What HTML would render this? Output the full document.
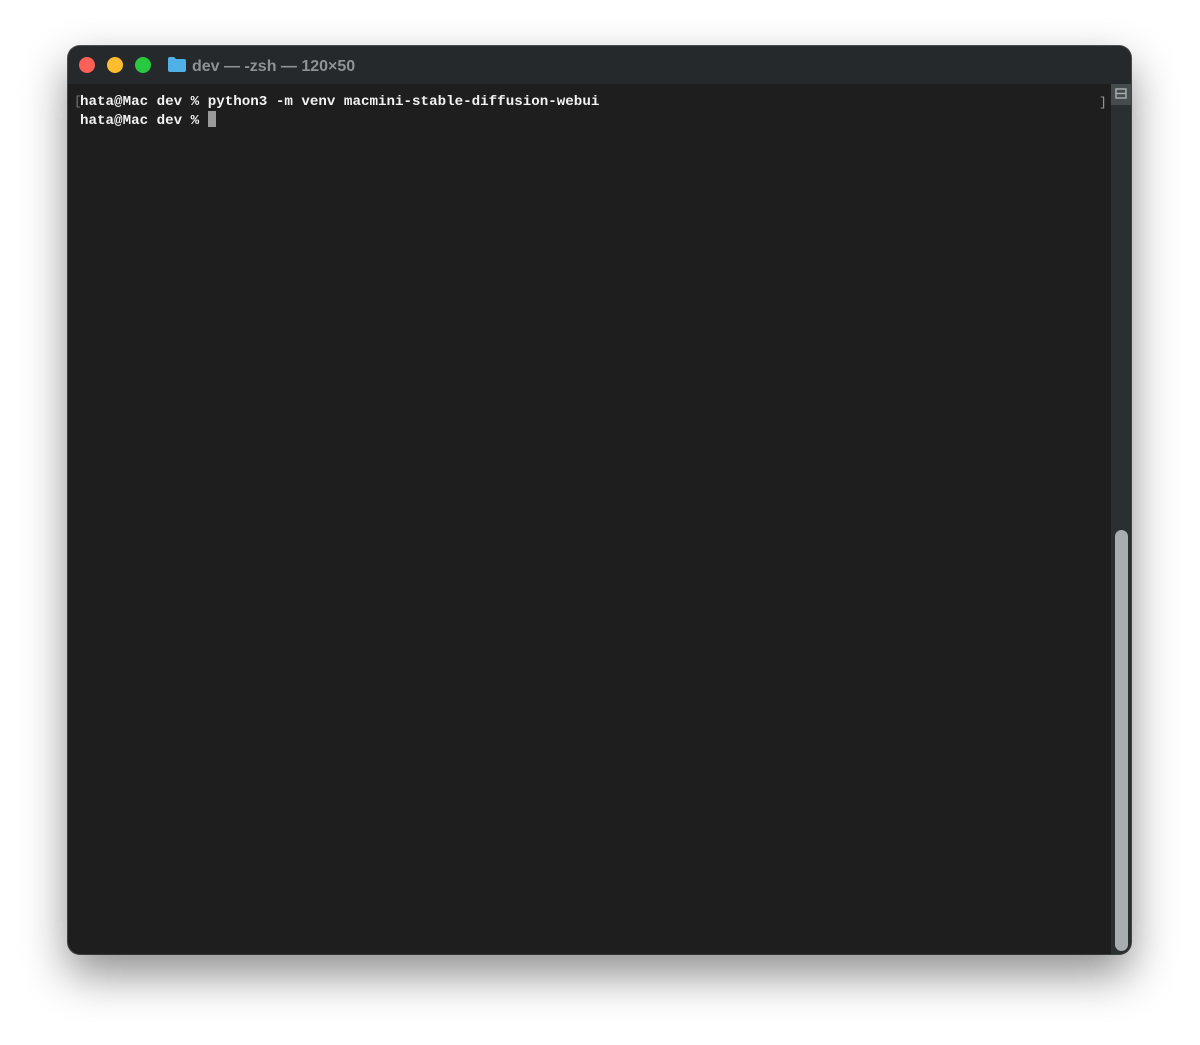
<!DOCTYPE html>
<html><head><style>
body{margin:0;width:1200px;height:1045px;background:#fff;position:relative;overflow:hidden;font-family:"Liberation Sans",sans-serif}
.win{position:absolute;left:68px;top:46px;width:1063px;height:908px;border-radius:12px;background:#1e1e1e;box-shadow:0 20px 45px rgba(0,0,0,.45),0 0 0 1px #555;overflow:hidden}
.tb{position:absolute;left:0;top:0;right:0;height:38px;background:#25292b}
.dot{position:absolute;top:11px;width:16px;height:16px;border-radius:50%}
.title{position:absolute;left:124px;top:12px;color:#8e9294;font-size:16px;font-weight:bold}
.sb{position:absolute;right:0;top:38px;width:20px;bottom:0;background:#2a2f31}
.btn{position:absolute;right:0;top:38px;width:20px;height:21px;background:#464b4d}
.thumb{position:absolute;left:1047px;top:484px;width:13px;height:421px;border-radius:7px;background:#a9adaf}
.txt{position:absolute;left:12px;top:48px;color:#f2f2f2;font-family:"Liberation Mono",monospace;font-weight:bold;font-size:14.2px;line-height:17px;white-space:pre}
.cur{display:inline-block;width:8px;height:16px;background:#9a9a9a;vertical-align:-3px}
</style></head><body>
<div class="win">
<div class="tb">
<div class="dot" style="left:11px;background:#fe5f57"></div>
<div class="dot" style="left:39px;background:#febc2e"></div>
<div class="dot" style="left:67px;background:#28c840"></div>
<svg style="position:absolute;left:100px;top:11px" width="18" height="15"><path d="M0 2q0-2 2-2h4l2 2h8q2 0 2 2v9q0 2-2 2H2q-2 0-2-2z" fill="#4fb1e8"/></svg>
<div class="title">dev — -zsh — 120×50</div>
</div>
<div class="sb"></div>
<div class="btn"><svg width="20" height="21"><rect x="5" y="5" width="10" height="9" fill="none" stroke="#aaa" stroke-width="1.5"/><line x1="5" y1="9.5" x2="15" y2="9.5" stroke="#aaa" stroke-width="1.5"/></svg></div>
<div class="thumb"></div>
<div style="position:absolute;left:6px;top:48px;color:#777;font-family:'Liberation Mono',monospace;font-size:13px">[</div>
<div class="txt">hata@Mac dev % python3 -m venv macmini-stable-diffusion-webui
hata@Mac dev % <span class="cur"></span></div>
<div style="position:absolute;left:1031px;top:49px;color:#999;font-family:'Liberation Mono',monospace;font-size:13px">]</div>
</div>
</body></html>
